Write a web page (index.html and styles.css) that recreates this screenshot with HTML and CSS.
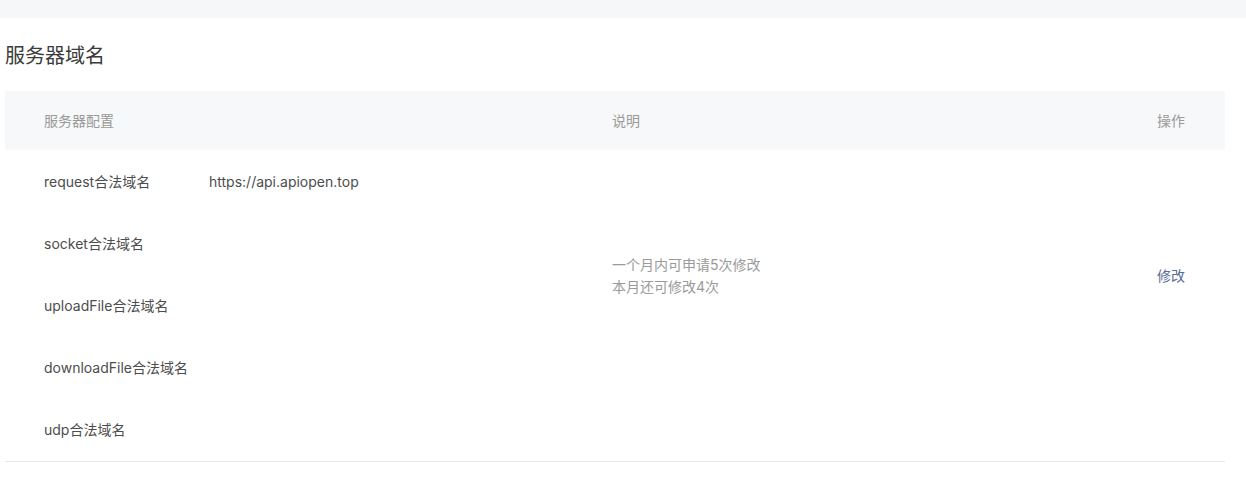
FILE: index.html
```html
<!DOCTYPE html>
<html lang="zh-CN">
<head>
<meta charset="utf-8">
<title>服务器域名</title>
<link rel="stylesheet" href="styles.css">
</head>
<body>
<div class="topbar"></div>
<section class="panel">
  <h2 class="title">服务器域名</h2>
  <div class="table">
    <div class="thead">
      <div class="th c1">服务器配置</div>
      <div class="th c2">说明</div>
      <div class="th c3">操作</div>
    </div>
    <div class="tbody">
      <div class="td c1">
        <div class="item"><span class="label">request合法域名</span><span class="value">https://api.apiopen.top</span></div>
        <div class="item"><span class="label">socket合法域名</span></div>
        <div class="item"><span class="label">uploadFile合法域名</span></div>
        <div class="item"><span class="label">downloadFile合法域名</span></div>
        <div class="item"><span class="label">udp合法域名</span></div>
      </div>
      <div class="td c2 mid">
        <div class="desc">一个月内可申请5次修改<br>本月还可修改4次</div>
      </div>
      <div class="td c3 mid">
        <a class="link" href="#">修改</a>
      </div>
    </div>
  </div>
</section>
</body>
</html>
```
FILE: styles.css
```css
* { box-sizing: border-box; }
html, body { margin: 0; padding: 0; background: #fff; }
body {
  font-family: "Inter", "Noto Sans CJK SC", sans-serif;
  color: #353535;
  width: 1246px;
  height: 483px;
  overflow: hidden;
}
.topbar { height: 18px; background: #f6f7f9; }
.panel { padding: 0 21px 0 5px; }
.title {
  margin: 0;
  height: 73px;
  padding-top: 26px;
  font-size: 20px;
  line-height: 24px;
  font-weight: normal;
  color: #3a3a3a;
}
.table { width: 1220px; }
.thead {
  display: grid;
  grid-template-columns: 568px 545px 107px;
  height: 59px;
  background: #f6f8f9;
  align-items: center;
}
.th {
  padding-left: 39px;
  font-size: 14px;
  color: #9a9a9a;
  line-height: 20px;
  padding-top: 1px;
}
.tbody {
  display: grid;
  grid-template-columns: 568px 545px 107px;
  border-bottom: 1px solid #e7e7e7;
  padding-top: 1px;
}
.td { padding-left: 39px; font-size: 14px; }
.item {
  height: 62px;
  display: flex;
  align-items: center;
}
.label { width: 165px; color: #4d4d4d; line-height: 20px; }
.value { color: #4d4d4d; line-height: 20px; }
.mid {
  display: flex;
  align-items: center;
  padding-bottom: 61px;
}
.desc { color: #9a9a9a; line-height: 22px; }
.link { color: #576b95; text-decoration: none; line-height: 20px; }
```
